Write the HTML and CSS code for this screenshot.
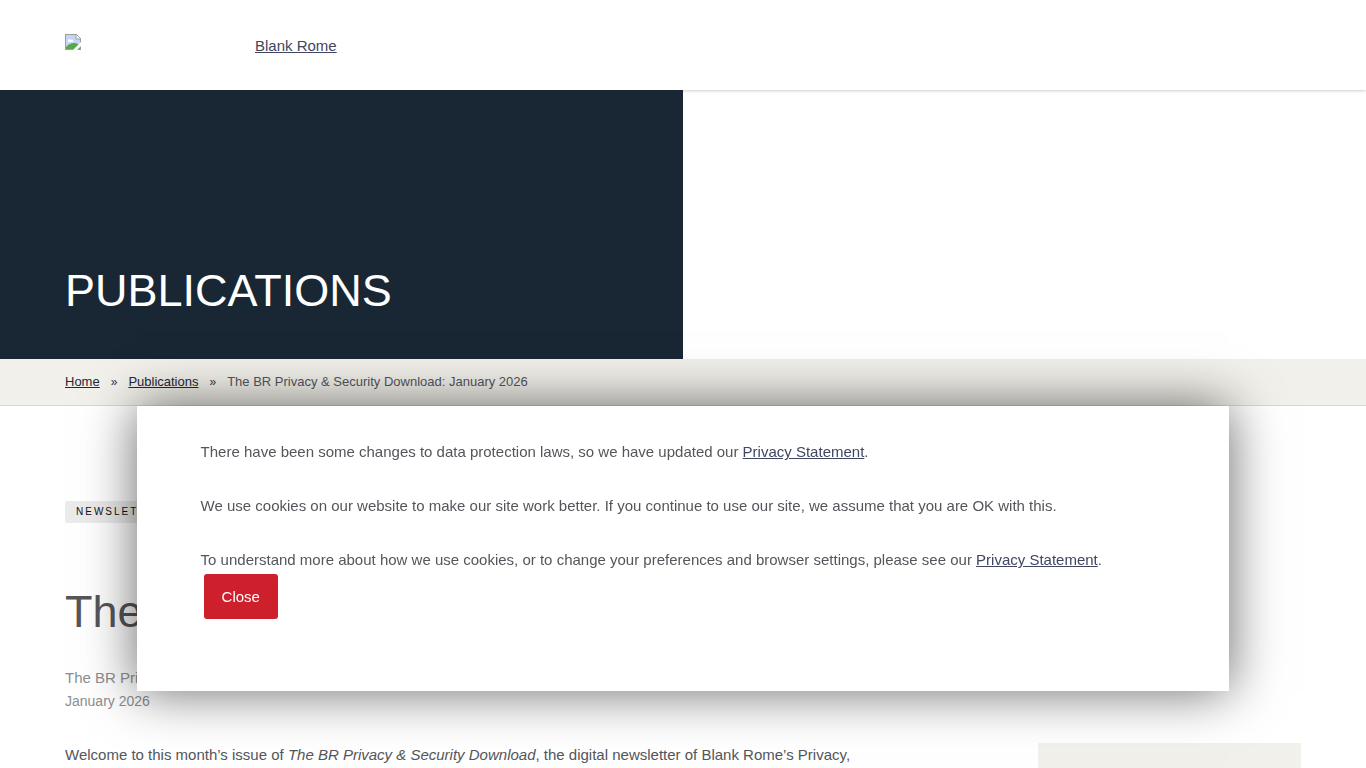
FILE: index.html
```html
<!DOCTYPE html>
<html lang="en">
<head>
    <meta charset="UTF-8">
    <meta name="viewport" content="width=device-width, initial-scale=1.0">
    <title>The BR Privacy &amp; Security Download: January 2026 | Blank Rome LLP</title>
    <link rel="stylesheet" href="styles.css">
</head>
<body>
    <header class="site-header">
        <a href="#" class="logo" aria-label="Blank Rome home">
            <svg width="16" height="16" viewBox="0 0 16 16" aria-hidden="true">
                <path d="M0 0h11l5 5v11H0z" fill="#c3d6f5"/>
                <path d="M3 7c0-2 2-2 3-1 2-1 3 1 2 2H3z" fill="#fff"/>
                <path d="M1 15v-2c3-3 5-4 8-4s4 1 6 3v3z" fill="#58a846"/>
                <path d="M.5 0v15.500H16M0 .5h11" fill="none" stroke="#9a9da2"/>
                <path d="M15.500 16V5" fill="none" stroke="#9a9da2"/>
                <path d="M11 0v5h5z" fill="#fff" stroke="#9a9da2"/>
                <path d="M8 16l8-8v4l-4 4z" fill="#fff"/>
            </svg>
        </a>
        <a href="#" class="site-name">Blank Rome</a>
    </header>

    <section class="banner">
        <div class="banner-title">PUBLICATIONS</div>
    </section>

    <nav class="breadcrumb" aria-label="Breadcrumb">
        <a href="#">Home</a>
        <span class="sep">»</span>
        <a href="#">Publications</a>
        <span class="sep">»</span>
        <span>The BR Privacy &amp; Security Download: January 2026</span>
    </nav>

    <main class="page">
        <div class="tag">NEWSLETTERS</div>
        <h1>The BR Privacy &amp; Security Download: January 2026</h1>
        <div class="source">The BR Privacy &amp; Security Download</div>
        <div class="date">January 2026</div>
        <div class="columns">
            <article>
                <p>Welcome to this month’s issue of <em>The BR Privacy &amp; Security Download</em>, the digital newsletter of Blank Rome’s Privacy,</p>
            </article>
            <aside class="sidebar"></aside>
        </div>
    </main>

    <div class="cookie-notice" role="dialog" aria-label="Cookie notice">
        <p>There have been some changes to data protection laws, so we have updated our <a href="#">Privacy Statement</a>.</p>
        <p>We use cookies on our website to make our site work better. If you continue to use our site, we assume that you are OK with this.</p>
        <p>To understand more about how we use cookies, or to change your preferences and browser settings, please see our <a href="#">Privacy Statement</a>.</p>
        <button type="button">Close</button>
    </div>
</body>
</html>
```

FILE: styles.css
```css
* {
    box-sizing: border-box;
}

body {
    display: flex;
    flex-direction: column;
    margin: 0;
    height: 100vh;
    overflow: hidden;
    background-color: #fff;
    color: #54565b;
    font-family: "Liberation Sans", Arial, sans-serif;
    font-size: 15px;
    line-height: 27px;
}

a {
    color: #3f4660;
}

.site-header {
    position: relative;
    display: flex;
    flex-shrink: 0;
    align-items: center;
    height: 90px;
    padding: 0 65px;
    box-shadow: 0 1px 3px rgba(0, 0, 0, 0.2);
}

.logo {
    width: 190px;
    height: 22px;
}

.logo svg {
    display: block;
}

.banner {
    position: relative;
    display: flex;
    flex-shrink: 0;
    align-items: flex-end;
    width: 50%;
    height: 269px;
    padding: 0 65px 41px;
    background-color: #182733;
}

.banner-title {
    color: #fff;
    font-size: 45px;
    line-height: 54px;
}

.breadcrumb {
    display: flex;
    flex-shrink: 0;
    align-items: baseline;
    gap: 11px;
    height: 47px;
    padding: 9px 65px;
    background-color: #f2f0ea;
    border-bottom: 1px solid #d9d8c9;
    font-size: 13px;
}

.breadcrumb a {
    color: #23283a;
}

.sep {
    color: #33363c;
    font-size: 12px;
}

.page {
    flex: 1;
    min-height: 0;
    padding: 95px 65px 0;
}

.tag {
    width: fit-content;
    padding: 0 11px;
    background-color: #ebebeb;
    border-radius: 2px;
    color: #111;
    font-size: 10px;
    line-height: 22px;
    letter-spacing: 2px;
}

h1 {
    margin: 62px 0 27px;
    font-size: 45px;
    font-weight: normal;
    line-height: 54px;
    white-space: nowrap;
}

.source,
.date {
    color: #8c8e92;
    line-height: 24px;
}

.source {
    height: 23px;
}

.date {
    font-size: 14px;
}

.columns {
    display: flex;
    justify-content: space-between;
    margin-top: 30px;
}

article {
    width: 66%;
}

article p {
    margin: 0;
    line-height: 24px;
}

.sidebar {
    width: 263px;
    height: 300px;
    background-color: #f2f0ea;
}

.cookie-notice {
    position: fixed;
    left: 10%;
    right: 10%;
    bottom: 10%;
    padding: 32px 64px 72px;
    background-color: #fff;
    box-shadow: 0 0 50px rgba(0, 0, 0, 0.6);
}

.cookie-notice p {
    margin: 0 0 27px;
}

.cookie-notice p:last-of-type {
    margin-bottom: 1px;
}

.cookie-notice button {
    display: block;
    margin-left: 3px;
    padding: 9px 18px;
    border: 0;
    border-radius: 3px;
    background-color: #cd202c;
    color: #fff;
    font: inherit;
}
```
